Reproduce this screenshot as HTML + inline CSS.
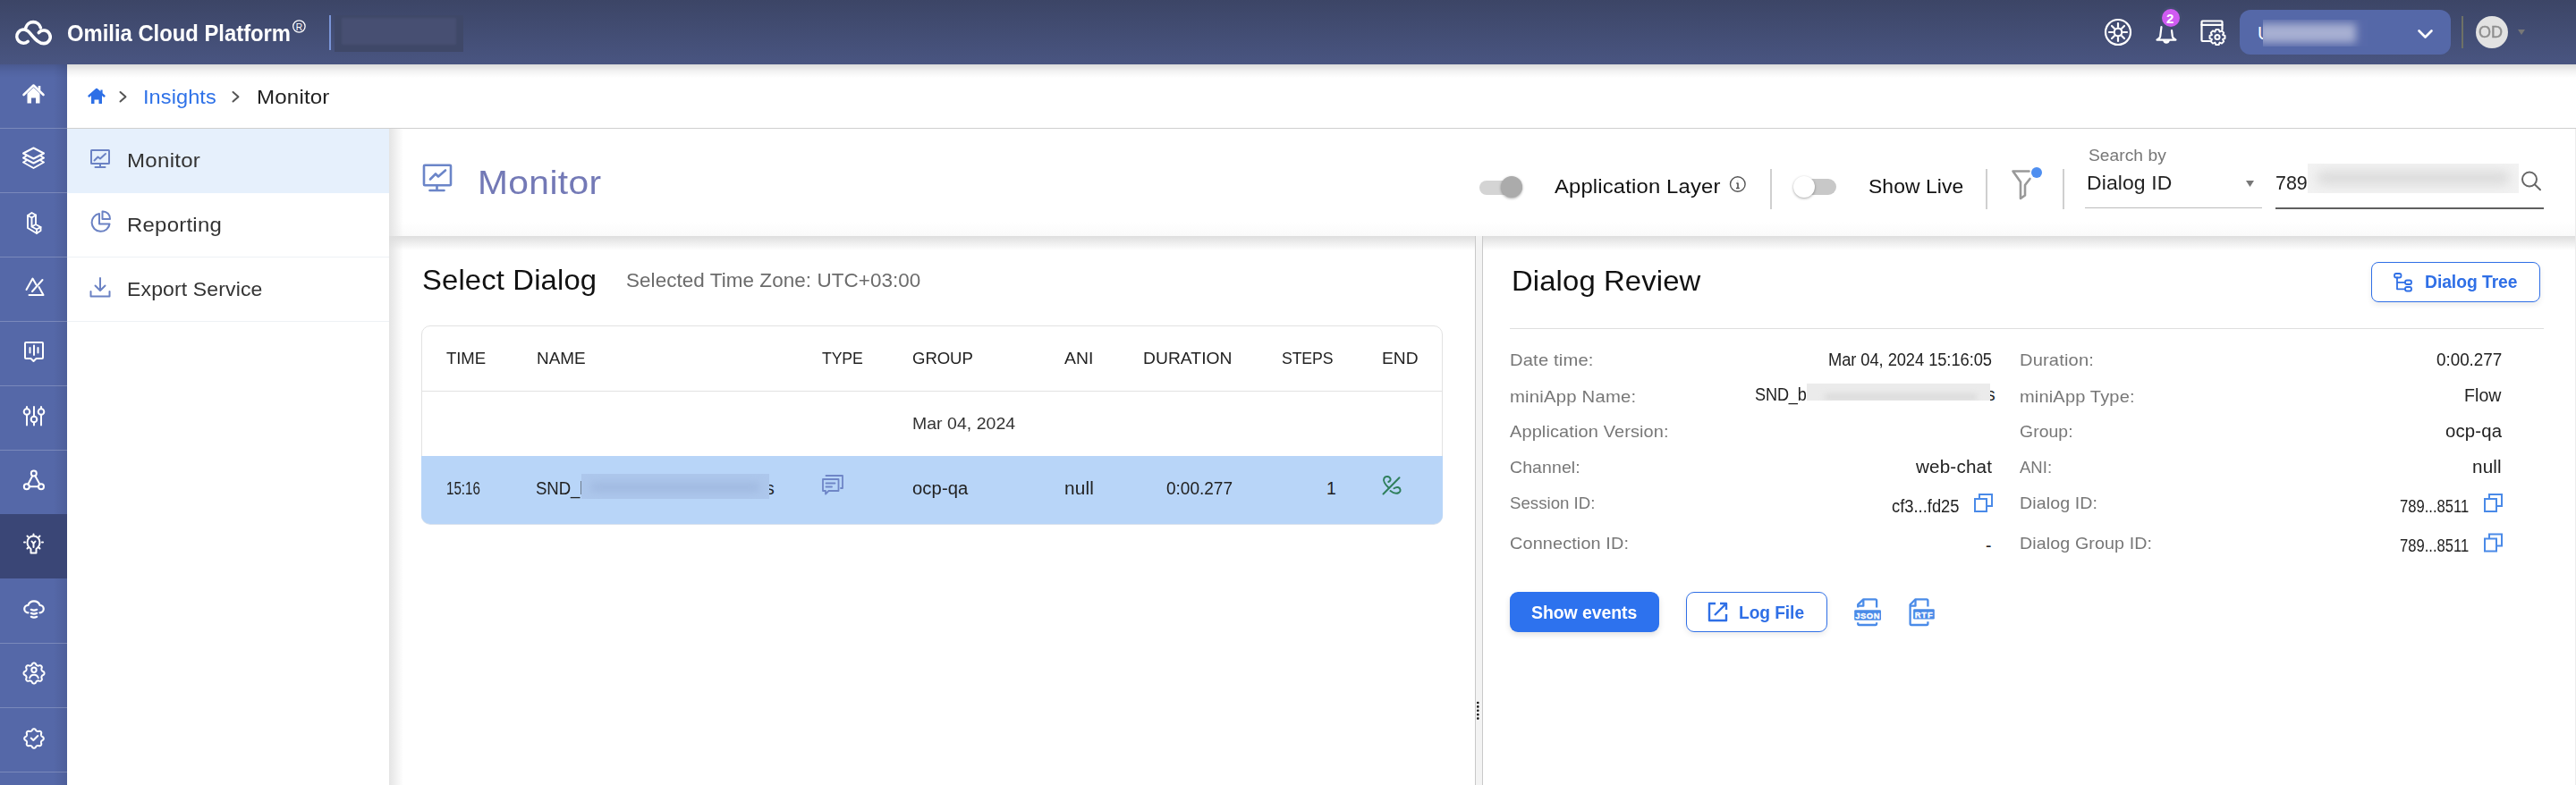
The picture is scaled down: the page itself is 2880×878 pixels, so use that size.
<!DOCTYPE html><html><head><meta charset="utf-8"><style>
html,body{margin:0;padding:0;width:2880px;height:878px;overflow:hidden;background:#fff;font-family:"Liberation Sans",sans-serif;}
.a{position:absolute;}
.t{position:absolute;white-space:nowrap;}
</style></head><body>

<div class="a" style="left:0;top:0;width:2880px;height:72px;background:linear-gradient(#3c4566,#495581);"></div>
<div class="a" style="left:368px;top:17px;width:2px;height:39px;background:#7a95d8;"></div>
<div class="a" style="left:374px;top:17px;width:144px;height:41px;background:#3f4868;"></div>
<div class="a" style="left:382px;top:20px;width:128px;height:30px;background:#474f72;filter:blur(1px);"></div>
<div class="a" style="left:2504px;top:11px;width:236px;height:50px;border-radius:12px;background:#5568a8;"></div>

<div class="a" style="left:2752px;top:18px;width:1.5px;height:36px;background:#6e7166;"></div>
<div class="a" style="left:2768px;top:18px;width:36px;height:36px;border-radius:50%;background:#e2e2e2;"></div>

<div class="a" style="left:0;top:72px;width:75px;height:806px;background:linear-gradient(90deg,#5568a8 0,#5568a8 60px,#4e5f9a 75px);"></div>
<div class="a" style="left:0;top:575px;width:75px;height:72px;background:#3a4676;"></div>
<div class="a" style="left:0;top:72px;width:2880px;height:15px;background:linear-gradient(rgba(0,0,0,0.14),rgba(0,0,0,0.05) 50%,rgba(0,0,0,0));"></div>

<div class="a" style="left:75px;top:143px;width:2805px;height:1px;background:#cfcfcf;"></div>
<div class="a" style="left:75px;top:144px;width:360px;height:72px;background:#e6f0fc;"></div>
<div class="a" style="left:75px;top:287px;width:360px;height:1px;background:#eef1f5;"></div>
<div class="a" style="left:75px;top:359px;width:360px;height:1px;background:#eef1f5;"></div>

<div class="a" style="left:435px;top:144px;width:2445px;height:734px;background:#fff;"></div>
<div class="a" style="left:435px;top:248px;width:2445px;height:16px;background:linear-gradient(#fff,#fafafa);"></div>
<div class="a" style="left:435px;top:144px;width:16px;height:734px;background:linear-gradient(90deg,#e4e4e4,rgba(255,255,255,0));"></div>
<div class="a" style="left:435px;top:264px;width:2445px;height:16px;background:linear-gradient(#dedede,rgba(255,255,255,0));"></div>

<div class="a" style="left:1654px;top:202px;width:48px;height:16px;border-radius:8px;background:#d4d4d4;"></div>
<div class="a" style="left:1678px;top:197px;width:24px;height:24px;border-radius:50%;background:#ababab;box-shadow:0 1px 3px rgba(0,0,0,0.35);"></div>
<div class="a" style="left:1979px;top:189px;width:2px;height:45px;background:#cfcfcf;"></div>
<div class="a" style="left:2017px;top:200px;width:36px;height:18px;border-radius:9px;background:#c8c8c8;"></div>
<div class="a" style="left:2005px;top:197px;width:24px;height:24px;border-radius:50%;background:#fff;box-shadow:0 1px 3px rgba(0,0,0,0.35);"></div>
<div class="a" style="left:2220px;top:189px;width:2px;height:45px;background:#cfcfcf;"></div>
<div class="a" style="left:2306px;top:189px;width:2px;height:45px;background:#cfcfcf;"></div>
<div class="a" style="left:2331px;top:232px;width:198px;height:1px;background:#bbb;"></div>
<div class="a" style="left:2544px;top:232px;width:300px;height:1.5px;background:#606060;"></div>
<div class="a" style="left:2580px;top:183px;width:236px;height:33px;background:#f2f2f2;overflow:hidden;"><div class="a" style="left:10px;top:8px;width:216px;height:16px;background:#dcdcdc;filter:blur(6px);border-radius:8px;"></div></div>

<div class="a" style="left:2879px;top:144px;width:1px;height:734px;background:#ececec;"></div>
<div class="a" style="left:1649px;top:264px;width:9px;height:614px;background:#f3f3f3;border-left:1px solid #c9c9c9;border-right:1px solid #c9c9c9;box-sizing:border-box;"></div>

<div class="a" style="left:471px;top:364px;width:1142px;height:222px;border:1px solid #e2e2e2;border-radius:10px;box-sizing:border-box;"></div>
<div class="a" style="left:472px;top:437px;width:1140px;height:1px;background:#e2e2e2;"></div>
<div class="a" style="left:471px;top:510px;width:1142px;height:76px;background:#b8d5f8;border-radius:0 0 10px 10px;box-shadow:0 1px 0 #d9e2ee;"></div>


<div class="a" style="left:1688px;top:367px;width:1156px;height:1px;background:#dedede;"></div>

<div class="a" style="left:2651px;top:293px;width:189px;height:45px;border:1.5px solid #2f6fe6;border-radius:8px;box-sizing:border-box;box-shadow:0 3px 6px rgba(0,0,0,0.08);"></div>
<div class="a" style="left:1688px;top:662px;width:167px;height:45px;background:#2d72ee;border-radius:9px;box-shadow:0 3px 6px rgba(0,0,0,0.12);"></div>
<div class="a" style="left:1885px;top:662px;width:158px;height:45px;border:1.5px solid #2f6fe6;border-radius:9px;box-sizing:border-box;box-shadow:0 3px 6px rgba(0,0,0,0.08);"></div>

<svg class="a" style="left:0;top:0" width="2880" height="878" viewBox="0 0 2880 878" fill="none" stroke-linecap="round" stroke-linejoin="round">
<!-- header logo -->
<g stroke="#fff" stroke-width="3.6">
<path d="M31.2 46.4 A7.5 7.5 0 1 1 30.2 34.2 C35 36.5 40 48.6 48.9 48.6 A7.3 7.3 0 1 0 43.3 36.6"/>
<path d="M28.8 31 A8.6 8.6 0 0 1 45.4 31"/>
</g>
<circle cx="334.4" cy="29.5" r="6.7" stroke="#fff" stroke-width="1.3"/>
<text x="334.4" y="33.7" font-family="Liberation Sans" font-size="10.3" fill="#fff" text-anchor="middle">R</text>
<!-- sun -->
<g stroke="#fff" stroke-width="2.2">
<circle cx="2368" cy="36" r="14"/>
<circle cx="2368" cy="36" r="4.3"/>
<path d="M2368 26v4M2368 42v4M2358 36h4M2374 36h4M2361 29l2.8 2.8M2372.2 40.2l2.8 2.8M2375 29l-2.8 2.8M2363.8 40.2l-2.8 2.8"/>
</g>
<!-- bell -->
<g stroke="#fff" stroke-width="2.2">
<path d="M2416.5 30 L2415.2 40.5 Q2414.5 43.5 2411.5 44.6 L2432.5 44.6 Q2429.5 43.5 2428.8 40.5 L2428 34"/>
<path d="M2419.3 45.5 A2.8 2.8 0 0 0 2424.7 45.5" fill="#fff"/>
</g>
<circle cx="2427" cy="20" r="12.5" fill="#434c70"/>
<circle cx="2427" cy="20" r="10" fill="#d05bf2"/>
<!-- calendar gear -->
<g stroke="#fff" stroke-width="2.2">
<path d="M2471 46 H2462.5 Q2461.5 46 2461.5 45 V24.5 Q2461.5 23.5 2462.5 23.5 H2483.5 Q2484.5 23.5 2484.5 24.5 V33"/>
<path d="M2461.5 27.8 H2484.5"/>
</g>
<g transform="translate(2479 41.5)" stroke="#fff" stroke-width="2" fill="#434e77">
<path d="M-1.6 -8.5 L1.6 -8.5 L2.6 -6 L5 -7.1 L7.2 -4.9 L6.1 -2.5 L8.5 -1.6 L8.5 1.6 L6.1 2.5 L7.2 4.9 L5 7.1 L2.6 6.1 L1.6 8.5 L-1.6 8.5 L-2.6 6.1 L-5 7.1 L-7.2 4.9 L-6.1 2.5 L-8.5 1.6 L-8.5 -1.6 L-6.1 -2.5 L-7.2 -4.9 L-5 -7.1 L-2.6 -6 Z"/>
<circle r="2.6" fill="none"/>
</g>
<path d="M2704.5 34.5 L2711.5 41.5 L2718.5 34.5" stroke="#fff" stroke-width="2.6"/>
<path d="M2815 33 L2823 33 L2819 39 Z" fill="#777"/>

<!-- sidebar dividers -->
<g fill="rgba(255,255,255,0.22)">
<rect x="0" y="143" width="75" height="1"/><rect x="0" y="215" width="75" height="1"/><rect x="0" y="287" width="75" height="1"/>
<rect x="0" y="359" width="75" height="1"/><rect x="0" y="431" width="75" height="1"/><rect x="0" y="503" width="75" height="1"/>
<rect x="0" y="719" width="75" height="1"/><rect x="0" y="791" width="75" height="1"/><rect x="0" y="863" width="75" height="1"/>
</g>
<!-- home -->
<path d="M26.5 106 L37.5 95.5 L48.5 106" stroke="#fff" stroke-width="2.6"/>
<path d="M44 96 V101" stroke="#fff" stroke-width="2.6" stroke-linecap="butt"/>
<path d="M30.5 104.5 L37.5 98 L44.5 104.5 V115.5 H40 V109.5 H35 V115.5 H30.5 Z" fill="#fff"/>
<!-- layers -->
<g stroke="#fff" stroke-width="2">
<path d="M37.5 165.5 L49 171.5 L37.5 177.5 L26 171.5 Z"/>
<path d="M29.5 174.5 L26 176.5 L37.5 182.5 L49 176.5 L45.5 174.5"/>
<path d="M29.5 179.5 L26 181.5 L37.5 188 L49 181.5 L45.5 179.5"/>
</g>
<!-- L block -->
<g stroke="#fff" stroke-width="1.9">
<path d="M31 241 L35.5 238 L40 240.5 V251 L45.5 254 V258 L41 261 L31 255 Z"/>
<path d="M31 241 L35.5 243.5 V253.5 L41 256.5 V261 M35.5 243.5 L40 240.5 M40 251 L35.5 253.5 M41 256.5 L45.5 254"/>
</g>
<!-- triangle with slash -->
<g stroke="#fff" stroke-width="2">
<path d="M29.5 324 L36.5 311.5 L40.5 318.5"/>
<path d="M32.5 330 H48.5 L43.5 321"/>
<path d="M36 326 L47.5 313"/>
</g>
<!-- speech box -->
<g stroke="#fff" stroke-width="2">
<path d="M29 383 H47 Q48 383 48 384 V400 Q48 401 47 401 H40.5 L37.5 404 L34.5 401 H29 Q28 401 28 400 V384 Q28 383 29 383 Z"/>
<path d="M33.5 389 V394.5 M38 386.5 V397 M42.5 389 V394.5"/>
</g>
<!-- sliders -->
<g stroke="#fff" stroke-width="2">
<path d="M30 455 V457 M30 464 V475.5 M38 455 V465.5 M38 472.5 V475.5 M46 455 V457 M46 464 V475.5"/>
<circle cx="30" cy="460.5" r="3.3"/><circle cx="38" cy="469" r="3.3"/><circle cx="46" cy="460.5" r="3.3"/>
</g>
<!-- nodes -->
<g stroke="#fff" stroke-width="2">
<circle cx="37.8" cy="529.5" r="3"/><circle cx="29.8" cy="544.3" r="3"/><circle cx="46" cy="544.3" r="3"/>
<path d="M36.3 532.2 L31.3 541.7 M39.3 532.2 L44.5 541.7 M32.8 544.3 H43"/>
</g>
<!-- bulb -->
<g stroke="#fff" stroke-width="2">
<path d="M34.5 614 Q30.5 611 30.5 606.5 A7 7 0 0 1 44.5 606.5 Q44.5 611 40.5 614 V618.5 H34.5 Z"/>
<path d="M35.5 605.5 L37.5 608 L39.5 605.5 M37.5 608 V612"/>
<path d="M37.5 597.5 V598.5 M28 606.5 H27 M48 606.5 H47 M30.5 599.5 L31.2 600.2 M44.5 599.5 L43.8 600.2 M30.5 613.5 L31.2 612.8 M44.5 613.5 L43.8 612.8"/>
</g>
<!-- cloud db -->
<g stroke="#fff" stroke-width="2">
<path d="M31.5 685.3 A4.25 4.25 0 0 1 31.5 676.8 A7 7 0 0 1 44.5 676.8 A4.25 4.25 0 0 1 44.5 685.3" stroke-width="2.2"/>
<path d="M34.8 681.8 Q38 683.4 41.2 681.8 M34.8 685.8 Q38 687.4 41.2 685.8 M34.8 689.8 Q38 691.4 41.2 689.8" stroke-width="2.2"/>
</g>
<!-- gear person -->
<g stroke="#fff" stroke-width="2">
<path d="M49.50 753.00 L49.47 753.45 L49.38 753.90 L49.18 754.32 L48.79 754.71 L48.20 755.03 L47.60 755.31 L47.18 755.59 L46.92 755.90 L46.74 756.22 L46.59 756.56 L46.46 756.90 L46.36 757.26 L46.32 757.66 L46.42 758.16 L46.65 758.78 L46.84 759.42 L46.84 759.97 L46.68 760.42 L46.43 760.79 L46.13 761.13 L45.79 761.43 L45.42 761.68 L44.97 761.84 L44.42 761.84 L43.78 761.65 L43.16 761.42 L42.66 761.32 L42.26 761.36 L41.90 761.46 L41.56 761.59 L41.22 761.74 L40.90 761.92 L40.59 762.18 L40.31 762.60 L40.03 763.20 L39.71 763.79 L39.32 764.18 L38.90 764.38 L38.45 764.47 L38.00 764.50 L37.55 764.47 L37.10 764.38 L36.68 764.18 L36.29 763.79 L35.97 763.20 L35.69 762.60 L35.41 762.18 L35.10 761.92 L34.78 761.74 L34.44 761.59 L34.10 761.46 L33.74 761.36 L33.34 761.32 L32.84 761.42 L32.22 761.65 L31.58 761.84 L31.03 761.84 L30.58 761.68 L30.21 761.43 L29.87 761.13 L29.57 760.79 L29.32 760.42 L29.16 759.97 L29.16 759.42 L29.35 758.78 L29.58 758.16 L29.68 757.66 L29.64 757.26 L29.54 756.90 L29.41 756.56 L29.26 756.22 L29.08 755.90 L28.82 755.59 L28.40 755.31 L27.80 755.03 L27.21 754.71 L26.82 754.32 L26.62 753.90 L26.53 753.45 L26.50 753.00 L26.53 752.55 L26.62 752.10 L26.82 751.68 L27.21 751.29 L27.80 750.97 L28.40 750.69 L28.82 750.41 L29.08 750.10 L29.26 749.78 L29.41 749.44 L29.54 749.10 L29.64 748.74 L29.68 748.34 L29.58 747.84 L29.35 747.22 L29.16 746.58 L29.16 746.03 L29.32 745.58 L29.57 745.21 L29.87 744.87 L30.21 744.57 L30.58 744.32 L31.03 744.16 L31.58 744.16 L32.22 744.35 L32.84 744.58 L33.34 744.68 L33.74 744.64 L34.10 744.54 L34.44 744.41 L34.78 744.26 L35.10 744.08 L35.41 743.82 L35.69 743.40 L35.97 742.80 L36.29 742.21 L36.68 741.82 L37.10 741.62 L37.55 741.53 L38.00 741.50 L38.45 741.53 L38.90 741.62 L39.32 741.82 L39.71 742.21 L40.03 742.80 L40.31 743.40 L40.59 743.82 L40.90 744.08 L41.22 744.26 L41.56 744.41 L41.90 744.54 L42.26 744.64 L42.66 744.68 L43.16 744.58 L43.78 744.35 L44.42 744.16 L44.97 744.16 L45.42 744.32 L45.79 744.57 L46.13 744.87 L46.43 745.21 L46.68 745.58 L46.84 746.03 L46.84 746.58 L46.65 747.22 L46.42 747.84 L46.32 748.34 L46.36 748.74 L46.46 749.10 L46.59 749.44 L46.74 749.78 L46.92 750.10 L47.18 750.41 L47.60 750.69 L48.20 750.97 L48.79 751.29 L49.18 751.68 L49.38 752.10 L49.47 752.55 Z"/>
<circle cx="38" cy="749.3" r="2.7"/>
<path d="M33.2 758.3 A5 5 0 0 1 42.8 758.3"/>
</g>
<!-- badge check -->
<g stroke="#fff" stroke-width="2">
<path d="M48.80 826.00 L48.76 826.42 L48.65 826.84 L48.42 827.23 L48.07 827.59 L47.61 827.91 L47.15 828.20 L46.76 828.47 L46.48 828.76 L46.28 829.06 L46.13 829.37 L46.02 829.70 L45.95 830.05 L45.95 830.45 L46.02 830.91 L46.15 831.44 L46.25 831.99 L46.24 832.50 L46.12 832.94 L45.91 833.31 L45.64 833.64 L45.31 833.91 L44.94 834.12 L44.50 834.24 L43.99 834.25 L43.44 834.15 L42.91 834.02 L42.45 833.95 L42.05 833.95 L41.70 834.02 L41.37 834.13 L41.06 834.28 L40.76 834.48 L40.47 834.76 L40.20 835.15 L39.91 835.61 L39.59 836.07 L39.23 836.42 L38.84 836.65 L38.42 836.76 L38.00 836.80 L37.58 836.76 L37.16 836.65 L36.77 836.42 L36.41 836.07 L36.09 835.61 L35.80 835.15 L35.53 834.76 L35.24 834.48 L34.94 834.28 L34.63 834.13 L34.30 834.02 L33.95 833.95 L33.55 833.95 L33.09 834.02 L32.56 834.15 L32.01 834.25 L31.50 834.24 L31.06 834.12 L30.69 833.91 L30.36 833.64 L30.09 833.31 L29.88 832.94 L29.76 832.50 L29.75 831.99 L29.85 831.44 L29.98 830.91 L30.05 830.45 L30.05 830.05 L29.98 829.70 L29.87 829.37 L29.72 829.06 L29.52 828.76 L29.24 828.47 L28.85 828.20 L28.39 827.91 L27.93 827.59 L27.58 827.23 L27.35 826.84 L27.24 826.42 L27.20 826.00 L27.24 825.58 L27.35 825.16 L27.58 824.77 L27.93 824.41 L28.39 824.09 L28.85 823.80 L29.24 823.53 L29.52 823.24 L29.72 822.94 L29.87 822.63 L29.98 822.30 L30.05 821.95 L30.05 821.55 L29.98 821.09 L29.85 820.56 L29.75 820.01 L29.76 819.50 L29.88 819.06 L30.09 818.69 L30.36 818.36 L30.69 818.09 L31.06 817.88 L31.50 817.76 L32.01 817.75 L32.56 817.85 L33.09 817.98 L33.55 818.05 L33.95 818.05 L34.30 817.98 L34.63 817.87 L34.94 817.72 L35.24 817.52 L35.53 817.24 L35.80 816.85 L36.09 816.39 L36.41 815.93 L36.77 815.58 L37.16 815.35 L37.58 815.24 L38.00 815.20 L38.42 815.24 L38.84 815.35 L39.23 815.58 L39.59 815.93 L39.91 816.39 L40.20 816.85 L40.47 817.24 L40.76 817.52 L41.06 817.72 L41.37 817.87 L41.70 817.98 L42.05 818.05 L42.45 818.05 L42.91 817.98 L43.44 817.85 L43.99 817.75 L44.50 817.76 L44.94 817.88 L45.31 818.09 L45.64 818.36 L45.91 818.69 L46.12 819.06 L46.24 819.50 L46.25 820.01 L46.15 820.56 L46.02 821.09 L45.95 821.55 L45.95 821.95 L46.02 822.30 L46.13 822.63 L46.28 822.94 L46.48 823.24 L46.76 823.53 L47.15 823.80 L47.61 824.09 L48.07 824.41 L48.42 824.77 L48.65 825.16 L48.76 825.58 Z"/>
<path d="M34.7 825.6 L37.3 828 L42.3 823"/>
</g>

<!-- breadcrumb -->
<path d="M99.5 107.5 L108 100 L116.5 107.5" stroke="#2d6fe6" stroke-width="2.4"/>
<path d="M113.5 100.5 V104" stroke="#2d6fe6" stroke-width="2.2" stroke-linecap="butt"/>
<path d="M102 106 L108 101 L114 106 V116 H110.5 V111.5 H105.5 V116 H102 Z" fill="#2d6fe6"/>
<path d="M134.5 103 L140.5 108.2 L134.5 113.5" stroke="#555" stroke-width="2"/>
<path d="M260.5 103 L266.5 108.2 L260.5 113.5" stroke="#555" stroke-width="2"/>

<!-- submenu icons -->
<g stroke="#6b82c4" stroke-width="2">
<rect x="102" y="168" width="20" height="15" rx="0.5"/>
<path d="M112 183.5 V186.5 M106.5 187 H117.5 M105.5 179.5 L109.5 175.5 L112 177.5 L118 172"/>
<path d="M111 239 A10 10 0 1 0 122.5 250.5 H111 Z"/>
<path d="M114.5 236.5 A8 8 0 0 1 123 245 H114.5 Z"/>
<path d="M112 311 V325 M106.5 319.5 L112 325 L117.5 319.5 M101.5 326 V331.5 H122.5 V326"/>
</g>
<!-- title icon -->
<g stroke="#6b85c8" stroke-width="2.6">
<rect x="474" y="184.7" width="30" height="22.5" rx="1"/>
<path d="M488.5 207.5 V212.5 M480.5 213 H496.5 M481 200.5 L487 194.5 L490 197.5 L498 190.5"/>
</g>

<!-- info icon -->
<circle cx="1942.8" cy="206" r="8.3" stroke="#555" stroke-width="1.4"/>
<path d="M1942.8 202.5 V202.8 M1941.3 205 H1943 V210.5 M1941 210.5 H1944.8" stroke="#555" stroke-width="1.6" stroke-linecap="butt"/>
<!-- funnel -->
<path d="M2250.5 191.5 H2268.5 M2250.5 191.5 L2259 203.5 V222 L2264 218.5 V207 L2269.5 200" stroke="#999" stroke-width="2.6"/>
<circle cx="2277" cy="193" r="6" fill="#4f8ff0"/>
<path d="M2511 202 H2520 L2515.5 209 Z" fill="#777"/>
<!-- search -->
<circle cx="2828" cy="200.5" r="8" stroke="#666" stroke-width="2"/>
<path d="M2834 206.5 L2840 212.3" stroke="#666" stroke-width="2"/>

<!-- table icons -->
<g stroke="#6f86c7" stroke-width="1.8">
<path d="M923.5 532 H942 V546 H940"/>
<path d="M920 536 H937.5 V549 H926.5 L923 552.5 V549 H920 Z" fill="#b8d5f8"/>
<path d="M923.5 540.5 H933.5 M923.5 544.5 H930"/>
</g>
<g stroke="#2f7f5c" stroke-width="2">
<path d="M1546.5 552.5 L1564.5 534.2"/>
<path d="M1552.6 545.5 C1548.5 542 1546 537.5 1547.5 534.8 C1549 532 1553.5 532.3 1554.5 535.5 C1555 537 1553.8 538.5 1552.3 539"/>
<path d="M1554.5 549 C1557 551 1561 552.5 1564 551 C1566.5 549.5 1566 546 1563 545 C1561 544.5 1559.5 545.5 1558.5 546.2"/>
</g>
<!-- splitter dots -->
<g fill="#111"><circle cx="1652.3" cy="786" r="1.3"/><circle cx="1652.3" cy="790.4" r="1.3"/><circle cx="1652.3" cy="794.8" r="1.3"/><circle cx="1652.3" cy="799.2" r="1.3"/><circle cx="1652.3" cy="803.6" r="1.3"/></g>

<!-- copy icons -->
<g stroke="#4a8ae8" stroke-width="2" stroke-linecap="butt" stroke-linejoin="miter">
<path d="M2208 558 H2221 V572 H2208 Z M2213 558 V553 H2227 V566 H2221"/>
<path d="M2778 558 H2791 V572 H2778 Z M2783 558 V553 H2797 V566 H2791"/>
<path d="M2778 602.5 H2791 V616.5 H2778 Z M2783 602.5 V597.5 H2797 V610.5 H2791"/>
</g>
<!-- dialog tree icon -->
<g stroke="#2f6fe6" stroke-width="1.8">
<rect x="2677" y="306" width="7.5" height="4.5" rx="2"/>
<rect x="2689" y="313.5" width="7" height="4.5" rx="2"/>
<rect x="2689" y="321" width="7" height="4.5" rx="2"/>
<path d="M2680 310.5 V323.3 H2689 M2680 315.8 H2689"/>
</g>
<!-- external link icon -->
<g stroke="#2f6fe6" stroke-width="2.4" stroke-linecap="butt">
<path d="M1918 675 H1911 V694 H1930 V687"/>
<path d="M1923 675 H1930 V682 M1930 675 L1917 688"/>
</g>
<!-- json/rtf icons -->
<g stroke="#4a8be8" stroke-width="2.3" stroke-linecap="butt">
<path d="M2077.2 679.5 V676.2 L2083.3 670.3 H2096.6 Q2098.1 670.3 2098.1 671.8 V679.5"/>
<path d="M2083.3 670.8 V677.7 H2077.5"/>
<path d="M2077.2 696.3 V697.6 Q2077.2 699 2078.6 699 H2096.7 Q2098.1 699 2098.1 697.6 V696.3"/>
<path d="M2155.4 678.5 V671.8 Q2155.4 670.3 2153.9 670.3 H2141.5 L2135.6 676.2 V697.5 Q2135.6 699 2137.1 699 H2153.9 Q2155.4 699 2155.4 697.5 V695.3"/>
<path d="M2141.5 670.8 V677.7 H2135.9"/>
</g>
<rect x="2073.2" y="682.3" width="29.8" height="11.5" rx="1.2" fill="#4a8be8"/>
<rect x="2139.1" y="681.3" width="23.7" height="11.2" rx="1.2" fill="#4a8be8"/>
<text x="2088.1" y="691.6" font-family="Liberation Sans" font-weight="bold" font-size="9.4" fill="#fff" stroke="#fff" stroke-width="0.35" text-anchor="middle" letter-spacing="0.6">JSON</text>
<text x="2151.1" y="690.6" font-family="Liberation Sans" font-weight="bold" font-size="9.4" fill="#fff" stroke="#fff" stroke-width="0.35" text-anchor="middle" letter-spacing="0.9">RTF</text>
</svg>
<div class="t" style="left:75.00px;top:24.00px;font-size:26px;line-height:26px;color:#fff;transform:scaleX(0.9158);transform-origin:0 0;font-weight:bold;">Omilia Cloud Platform</div>
<div class="t" style="left:2524.00px;top:27.00px;font-size:20px;line-height:20px;color:#fff;">U</div>
<div class="t" style="left:2771.00px;top:28.00px;font-size:17.5px;line-height:17.5px;color:#8e8e8e;transform:scaleX(1.0286);transform-origin:0 0;-webkit-text-stroke:0.4px #8e8e8e;">OD</div>
<div class="t" style="left:2422.00px;top:13.00px;font-size:15px;line-height:15px;color:#fff;font-weight:bold;">2</div>
<div class="t" style="left:160.20px;top:97.00px;font-size:22.8px;line-height:22.8px;color:#2f72e8;letter-spacing:0.069px;transform:scaleX(1.0342);transform-origin:0 0;">Insights</div>
<div class="t" style="left:286.50px;top:97.00px;font-size:22.8px;line-height:22.8px;color:#222;letter-spacing:0.136px;transform:scaleX(1.0590);transform-origin:0 0;">Monitor</div>
<div class="t" style="left:142.40px;top:169.00px;font-size:21.8px;line-height:21.8px;color:#333;letter-spacing:0.238px;transform:scaleX(1.1048);transform-origin:0 0;">Monitor</div>
<div class="t" style="left:142.40px;top:241.00px;font-size:21.8px;line-height:21.8px;color:#333;letter-spacing:0.218px;transform:scaleX(1.0990);transform-origin:0 0;">Reporting</div>
<div class="t" style="left:142.40px;top:313.00px;font-size:21.8px;line-height:21.8px;color:#333;letter-spacing:0.113px;transform:scaleX(1.0570);transform-origin:0 0;">Export Service</div>
<div class="t" style="left:534.00px;top:186.00px;font-size:37.4px;line-height:37.4px;color:#7379b6;letter-spacing:0.346px;transform:scaleX(1.0896);transform-origin:0 0;">Monitor</div>
<div class="t" style="left:1737.80px;top:198.00px;font-size:22.2px;line-height:22.2px;color:#111;letter-spacing:0.145px;transform:scaleX(1.0742);transform-origin:0 0;">Application Layer</div>
<div class="t" style="left:2089.00px;top:198.00px;font-size:22.2px;line-height:22.2px;color:#111;letter-spacing:0.073px;transform:scaleX(1.0317);transform-origin:0 0;">Show Live</div>
<div class="t" style="left:2334.70px;top:165.00px;font-size:18.9px;line-height:18.9px;color:#777;letter-spacing:0.032px;transform:scaleX(1.0167);transform-origin:0 0;">Search by</div>
<div class="t" style="left:2332.60px;top:194.00px;font-size:21.8px;line-height:21.8px;color:#222;letter-spacing:0.107px;transform:scaleX(1.0526);transform-origin:0 0;">Dialog ID</div>
<div class="t" style="left:2544.00px;top:194.00px;font-size:21.8px;line-height:21.8px;color:#222;letter-spacing:-0.050px;transform:scaleX(0.9842);transform-origin:0 0;">789</div>
<div class="t" style="left:472.00px;top:298.00px;font-size:31.1px;line-height:31.1px;color:#111;letter-spacing:0.151px;transform:scaleX(1.0542);transform-origin:0 0;">Select Dialog</div>
<div class="t" style="left:699.50px;top:303.00px;font-size:21.8px;line-height:21.8px;color:#6b6b6b;letter-spacing:0.061px;transform:scaleX(1.0300);transform-origin:0 0;">Selected Time Zone: UTC+03:00</div>
<div class="t" style="left:499.40px;top:391.00px;font-size:19px;line-height:19px;color:#222;letter-spacing:-0.063px;transform:scaleX(0.9761);transform-origin:0 0;">TIME</div>
<div class="t" style="left:599.80px;top:391.00px;font-size:19px;line-height:19px;color:#222;transform:scaleX(0.9973);transform-origin:0 0;">NAME</div>
<div class="t" style="left:919.00px;top:391.00px;font-size:19px;line-height:19px;color:#222;letter-spacing:-0.189px;transform:scaleX(0.9324);transform-origin:0 0;">TYPE</div>
<div class="t" style="left:1020.00px;top:391.00px;font-size:19px;line-height:19px;color:#222;letter-spacing:-0.068px;transform:scaleX(0.9777);transform-origin:0 0;">GROUP</div>
<div class="t" style="left:1190.00px;top:391.00px;font-size:19px;line-height:19px;color:#222;letter-spacing:0.051px;transform:scaleX(1.0181);transform-origin:0 0;">ANI</div>
<div class="t" style="left:1278.20px;top:391.00px;font-size:19px;line-height:19px;color:#222;letter-spacing:0.036px;transform:scaleX(1.0143);transform-origin:0 0;">DURATION</div>
<div class="t" style="left:1432.60px;top:391.00px;font-size:19px;line-height:19px;color:#222;letter-spacing:-0.176px;transform:scaleX(0.9334);transform-origin:0 0;">STEPS</div>
<div class="t" style="left:1544.80px;top:391.00px;font-size:19px;line-height:19px;color:#222;letter-spacing:0.043px;transform:scaleX(1.0122);transform-origin:0 0;">END</div>
<div class="t" style="left:1020.00px;top:464.00px;font-size:19px;line-height:19px;color:#333;letter-spacing:0.044px;transform:scaleX(1.0242);transform-origin:0 0;">Mar 04, 2024</div>
<div class="t" style="left:499.00px;top:537.00px;font-size:19.5px;line-height:19.5px;color:#222;transform:scaleX(0.7774);transform-origin:0 0;">15:16</div>
<div class="t" style="left:598.60px;top:537.00px;font-size:19.5px;line-height:19.5px;color:#222;letter-spacing:-0.109px;transform:scaleX(0.9550);transform-origin:0 0;">SND_l</div>
<div class="t" style="left:856.00px;top:537.00px;font-size:19.5px;line-height:19.5px;color:#222;">s</div>
<div class="t" style="left:1020.00px;top:537.00px;font-size:19.5px;line-height:19.5px;color:#222;letter-spacing:0.082px;transform:scaleX(1.0380);transform-origin:0 0;">ocp-qa</div>
<div class="t" style="left:1190.20px;top:537.00px;font-size:19.5px;line-height:19.5px;color:#222;letter-spacing:0.125px;transform:scaleX(1.0675);transform-origin:0 0;">null</div>
<div class="t" style="left:1303.60px;top:537.00px;font-size:19.5px;line-height:19.5px;color:#222;letter-spacing:-0.040px;transform:scaleX(0.9790);transform-origin:0 0;">0:00.277</div>
<div class="t" style="left:1483.00px;top:537.00px;font-size:19.5px;line-height:19.5px;color:#222;">1</div>
<div class="t" style="left:1689.80px;top:299.00px;font-size:31.8px;line-height:31.8px;color:#111;letter-spacing:0.102px;transform:scaleX(1.0334);transform-origin:0 0;">Dialog Review</div>
<div class="t" style="left:2710.50px;top:306.00px;font-size:19.9px;line-height:19.9px;color:#2f6fe6;letter-spacing:-0.055px;transform:scaleX(0.9702);transform-origin:0 0;font-weight:bold;">Dialog Tree</div>
<div class="t" style="left:1688.00px;top:394.00px;font-size:18.6px;line-height:18.6px;color:#777;letter-spacing:0.148px;transform:scaleX(1.0851);transform-origin:0 0;">Date time:</div>
<div class="t" style="left:1688.00px;top:435.00px;font-size:18.6px;line-height:18.6px;color:#777;letter-spacing:0.181px;transform:scaleX(1.0920);transform-origin:0 0;">miniApp Name:</div>
<div class="t" style="left:1688.00px;top:474.00px;font-size:18.6px;line-height:18.6px;color:#777;letter-spacing:0.115px;transform:scaleX(1.0730);transform-origin:0 0;">Application Version:</div>
<div class="t" style="left:1688.00px;top:514.00px;font-size:18.6px;line-height:18.6px;color:#777;letter-spacing:0.092px;transform:scaleX(1.0477);transform-origin:0 0;">Channel:</div>
<div class="t" style="left:1688.00px;top:554.00px;font-size:18.6px;line-height:18.6px;color:#777;transform:scaleX(1.0042);transform-origin:0 0;">Session ID:</div>
<div class="t" style="left:1688.00px;top:599.00px;font-size:18.6px;line-height:18.6px;color:#777;letter-spacing:0.118px;transform:scaleX(1.0680);transform-origin:0 0;">Connection ID:</div>
<div class="t" style="left:2258.00px;top:394.00px;font-size:18.6px;line-height:18.6px;color:#777;letter-spacing:0.142px;transform:scaleX(1.0816);transform-origin:0 0;">Duration:</div>
<div class="t" style="left:2258.00px;top:435.00px;font-size:18.6px;line-height:18.6px;color:#777;letter-spacing:0.141px;transform:scaleX(1.0783);transform-origin:0 0;">miniApp Type:</div>
<div class="t" style="left:2258.00px;top:474.00px;font-size:18.6px;line-height:18.6px;color:#777;letter-spacing:0.083px;transform:scaleX(1.0406);transform-origin:0 0;">Group:</div>
<div class="t" style="left:2258.00px;top:514.00px;font-size:18.6px;line-height:18.6px;color:#777;transform:scaleX(0.9971);transform-origin:0 0;">ANI:</div>
<div class="t" style="left:2258.00px;top:554.00px;font-size:18.6px;line-height:18.6px;color:#777;letter-spacing:0.092px;transform:scaleX(1.0557);transform-origin:0 0;">Dialog ID:</div>
<div class="t" style="left:2258.00px;top:599.00px;font-size:18.6px;line-height:18.6px;color:#777;letter-spacing:0.098px;transform:scaleX(1.0580);transform-origin:0 0;">Dialog Group ID:</div>
<div class="t" style="left:2043.50px;top:393.00px;font-size:19.3px;line-height:19.3px;color:#222;letter-spacing:-0.082px;transform:scaleX(0.9510);transform-origin:0 0;">Mar 04, 2024 15:16:05</div>
<div class="t" style="left:1961.70px;top:432.00px;font-size:19.3px;line-height:19.3px;color:#222;letter-spacing:-0.158px;transform:scaleX(0.9403);transform-origin:0 0;">SND_b</div>
<div class="t" style="left:2221.00px;top:432.00px;font-size:19.3px;line-height:19.3px;color:#222;">s</div>
<div class="t" style="left:2141.73px;top:513.00px;font-size:19.3px;line-height:19.3px;color:#222;letter-spacing:0.147px;transform:scaleX(1.0714);transform-origin:0 0;">web-chat</div>
<div class="t" style="left:2115.00px;top:557.00px;font-size:19.3px;line-height:19.3px;color:#222;transform:scaleX(0.9524);transform-origin:0 0;">cf3...fd25</div>
<div class="t" style="left:2220.00px;top:601.00px;font-size:19.3px;line-height:19.3px;color:#222;">-</div>
<div class="t" style="left:2723.60px;top:393.00px;font-size:19.3px;line-height:19.3px;color:#222;letter-spacing:-0.039px;transform:scaleX(0.9793);transform-origin:0 0;">0:00.277</div>
<div class="t" style="left:2755.40px;top:433.00px;font-size:19.3px;line-height:19.3px;color:#222;letter-spacing:0.038px;transform:scaleX(1.0156);transform-origin:0 0;">Flow</div>
<div class="t" style="left:2734.00px;top:473.00px;font-size:19.3px;line-height:19.3px;color:#222;letter-spacing:0.123px;transform:scaleX(1.0573);transform-origin:0 0;">ocp-qa</div>
<div class="t" style="left:2764.40px;top:513.00px;font-size:19.3px;line-height:19.3px;color:#222;letter-spacing:0.135px;transform:scaleX(1.0732);transform-origin:0 0;">null</div>
<div class="t" style="left:2683.00px;top:557.00px;font-size:19.3px;line-height:19.3px;color:#222;transform:scaleX(0.8602);transform-origin:0 0;">789...8511</div>
<div class="t" style="left:2683.00px;top:601.00px;font-size:19.3px;line-height:19.3px;color:#222;transform:scaleX(0.8602);transform-origin:0 0;">789...8511</div>
<div class="t" style="left:1712.00px;top:675.00px;font-size:20px;line-height:20px;color:#fff;letter-spacing:-0.058px;transform:scaleX(0.9725);transform-origin:0 0;font-weight:bold;">Show events</div>
<div class="t" style="left:1944.00px;top:675.00px;font-size:20px;line-height:20px;color:#2f6fe6;letter-spacing:-0.076px;transform:scaleX(0.9596);transform-origin:0 0;font-weight:bold;">Log File</div><div class="a" style="left:649.5px;top:530px;width:210.5px;height:28px;background:#adc7ec;overflow:hidden;"><div class="a" style="left:10px;top:10px;width:190px;height:10px;background:#a0b9e0;filter:blur(5px);border-radius:5px;"></div></div><div class="a" style="left:2019.6px;top:429.4px;width:205.4px;height:19.1px;background:#ebebeb;overflow:hidden;"><div class="a" style="left:20px;top:12px;width:170px;height:6px;background:#d8d8d8;filter:blur(3px);"></div></div><div class="a" style="left:2530px;top:22px;width:117px;height:30px;background:#5769a9;overflow:hidden;"><div class="a" style="left:-6px;top:4px;width:110px;height:22px;background:#a7afd2;filter:blur(5px);"></div></div></body></html>
